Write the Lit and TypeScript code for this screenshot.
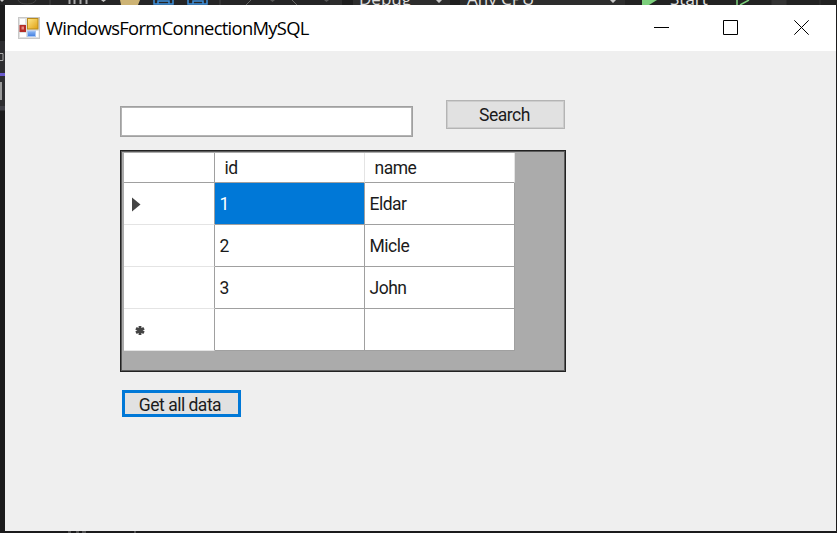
import { LitElement, html, css, svg } from "lit";
import { customElement } from "lit/decorators.js";
import { classMap } from "lit/directives/class-map.js";

@customElement("ide-toolbar")
class IdeToolbar extends LitElement {
  static styles = css`
    :host { display: block; height: 5px; overflow: hidden; }
    svg { display: block; }
    text { font: 17px "Open Sans", sans-serif; fill: #e0e0e0; }
  `;
  render() {
    return html`<svg width="837" height="5" viewBox="0 0 837 5">
      <rect width="837" height="5" fill="#2d2d2d" />
      <rect width="330" height="5" fill="#252526" />
      <path d="M0 0h4l-2 2zM101 0h5l-2.500 2zM436 0h6l-3 3zM610 0h6l-3 3zM715 0h5l-2.500 2z" fill="#c8c8c8" />
      <path d="M18 0q2 4 9 4t9-4M50 0v5M220 0v5" stroke="#444" fill="none" />
      <path d="M69.500 0v4M74.500 0v4M80.500 0v4M86.500 0v4" stroke="#aaa" stroke-width="2" />
      <path d="M120 0h20l-2 5h-17z" fill="#cdb374" />
      <path d="M154 0v4h19v-4M158 4v-3h11v3M188 0v4h19v-4M193 4v-3h10v3" fill="none" stroke="#3d8fda" stroke-width="1.500" />
      <path d="M251 0l-5 5M292 0l5 5" stroke="#666" />
      <path d="M270 0h5l-2.500 2zM324 0h5l-2.500 2zM804 0h5l-2.500 2z" fill="#555" />
      <rect x="342" width="11" height="5" fill="#1e1e1e" />
      <rect x="450" width="10" height="5" fill="#1e1e1e" />
      <rect x="625" width="212" height="5" fill="#222" />
      <path d="M642 0h15l-8 5h-7z" fill="#7ccf7c" />
      <path d="M737 0v5M749 0l-9 5" stroke="#7ccf7c" stroke-width="1.500" fill="none" />
      <path d="M772 0h14v5h-14zM820 0v5" fill="#333" stroke="#333" />
      <text x="359" y="4.500">Debug</text>
      <text x="467" y="4.500">Any CPU</text>
      <text x="670" y="4.500">Start</text>
    </svg>`;
  }
}

@customElement("title-bar")
class TitleBar extends LitElement {
  static styles = css`
    :host { display: flex; align-items: center; height: 46px; background: #fff; box-sizing: border-box; padding: 0 0 1px 13px; }
    .title { flex: 1; margin-left: 6px; font: 18.4px/26px "Open Sans", sans-serif; letter-spacing: -0.7px; color: #000; white-space: nowrap; }
    .controls { display: grid; grid-template-columns: 69px 71px 15px; padding-right: 27px; }
    svg { display: block; }
  `;
  render() {
    return html`
      <svg width="22" height="22" viewBox="0 0 22 22">
        <defs>
          <linearGradient id="gold" x2="1" y2="1"><stop stop-color="#ffe88a" /><stop offset="1" stop-color="#e0a010" /></linearGradient>
          <linearGradient id="blue" y2="1" x2="0"><stop stop-color="#8fb9f5" /><stop offset="1" stop-color="#3f7de0" /></linearGradient>
        </defs>
        <rect x=".5" y=".5" width="21" height="21" fill="#e0e0e0" stroke="#c8c8c8" />
        <rect x="2" y="2" width="5" height="5" fill="#fff" />
        <rect x="2" y="16" width="6" height="4" fill="#fff" />
        <rect x="18" y="14" width="2.500" height="6" fill="#fff" />
        <rect x="1.500" y="8" width="6.500" height="7" fill="#b52d26" />
        <rect x="3.500" y="9.500" width="2.500" height="3" fill="#e58880" />
        <rect x="9.500" y="1.500" width="10.500" height="10.500" fill="url(#gold)" stroke="#b88a1c" />
        <rect x="9.500" y="14" width="8" height="5.500" fill="url(#blue)" stroke="#a9c6f2" />
      </svg>
      <span class="title">WindowsFormConnectionMySQL</span>
      <div class="controls">${[
        svg`<path d="M0 7.500h15" />`,
        svg`<path d="M.5 .5h14v14h-14z" />`,
        svg`<path d="M.3 .3l14.400 14.400M14.700 .3l-14.400 14.400" />`,
      ].map((shape) => html`<svg width="15" height="15" fill="none" stroke="#000">${shape}</svg>`)}</div>
    `;
  }
}

interface Row { id: string; name: string; marker: string; }

@customElement("data-grid")
class DataGrid extends LitElement {
  static styles = css`
    :host { display: block; box-sizing: border-box; width: 446px; height: 222px; border: 1px solid #222; box-shadow: inset 0 0 0 1px #5c5c5c; background: #ababab; padding: 2px 0 0 3px; }
    .grid { display: grid; grid-template-columns: 91px 150px 150px; grid-template-rows: 30px repeat(4, 42px); width: 391px; }
    .cell { box-sizing: border-box; display: flex; align-items: center; background: #fff; border-right: 1px solid #a0a0a0; border-bottom: 1px solid #a0a0a0; padding: 1px 0 0 4.5px; white-space: pre; }
    .head { padding-left: 9.5px; border-right-color: #e4e4e4; }
    .corner { border-right-color: #a0a0a0; }
    .marker { border-bottom-color: #e4e4e4; padding-left: 8px; }
    .selected { background: #0078d7; color: #fff; }
    svg { display: block; }
  `;
  private rows: Row[] = [
    { id: "1", name: "Eldar", marker: "current" },
    { id: "2", name: "Micle", marker: "" },
    { id: "3", name: "John", marker: "" },
    { id: "", name: "", marker: "new" },
  ];
  private marker(kind: string) {
    if (kind === "current") return html`<svg width="10" height="16"><path d="M0 1.500l8.500 7-8.500 7z" fill="#444" /></svg>`;
    if (kind === "new") return html`<svg width="16" height="12"><path d="M8 2v9M4 4.200l8 4.600M12 4.200l-8 4.600" stroke="#444" stroke-width="2.800" /></svg>`;
    return "";
  }
  render() {
    return html`<div class="grid">
      <div class="cell corner"></div>
      <div class="cell head">id</div>
      <div class="cell head">name</div>
      ${this.rows.map((row, i) => html`
        <div class="cell marker">${this.marker(row.marker)}</div>
        <div class=${classMap({ cell: true, selected: i === 0 })}>${row.id}</div>
        <div class="cell">${row.name}</div>`)}
    </div>`;
  }
}

@customElement("app-root")
class AppRoot extends LitElement {
  static styles = css`
    :host { display: grid; grid-template: 5px 526px 2px / 5px 831px 1px; width: 837px; height: 533px; background: #1b1b1c; overflow: hidden; }
    ide-toolbar { grid-column: 1 / -1; }
    .side { grid-column: 1; grid-row: 2; }
    .side svg, .bottom svg { display: block; }
    .bottom { grid-column: 1 / -1; grid-row: 3; }
    .window { grid-column: 2; grid-row: 2; background: #efefef; }
    .form { padding: 49px 0 0 115px; display: flex; flex-direction: column; align-items: flex-start; font: 17.5px/20px Roboto, sans-serif; letter-spacing: -0.5px; color: #1b1b1b; }
    .search { display: flex; align-items: flex-start; gap: 33px; height: 50px; }
    .input { box-sizing: border-box; width: 293px; height: 31px; margin-top: 6px; background: #fff; border: 1px solid #a0a0a0; box-shadow: inset 0 0 0 1px #b4b4b4; }
    .search .input { font: inherit; outline: 0; padding: 0 4px; border-radius: 0; }
    button { box-sizing: border-box; font: inherit; letter-spacing: inherit; color: inherit; width: 119px; height: 29px; padding: 1px 2px 0 0; background: #e1e1e1; border: 1px solid #b4b4b4; box-shadow: inset 0 0 0 1px #cdcdcd; border-radius: 0; }
    .focused { height: 27px; margin: 18px 0 0 2px; border: 3px solid #0078d7; box-shadow: none; padding: 3px 3px 0 0; line-height: 18px; }
  `;
  render() {
    return html`
      <ide-toolbar></ide-toolbar>
      <div class="side"><svg width="5" height="526">
        <rect y="36" width="5" height="70" fill="#2d2d30" />
        <path d="M0 48.500h3v7h-3" fill="none" stroke="#aaa" />
        <rect y="68" width="5" height="3" fill="#6a5acd" />
        <rect y="77" width="2" height="18" fill="#999" />
        <rect y="101" width="5" height="4" fill="#3f3f46" />
      </svg></div>
      <div class="window">
        <title-bar></title-bar>
        <div class="form">
          <div class="search">
            <input class="input" type="text" aria-label="Search" />
            <button>Search</button>
          </div>
          <data-grid></data-grid>
          <button class="focused">Get all data</button>
        </div>
      </div>
      <div class="bottom"><svg width="837" height="2"><path d="M68 1h3M76 1h3M82 1h4M134 1h2" stroke="#888" /></svg></div>
    `;
  }
}
